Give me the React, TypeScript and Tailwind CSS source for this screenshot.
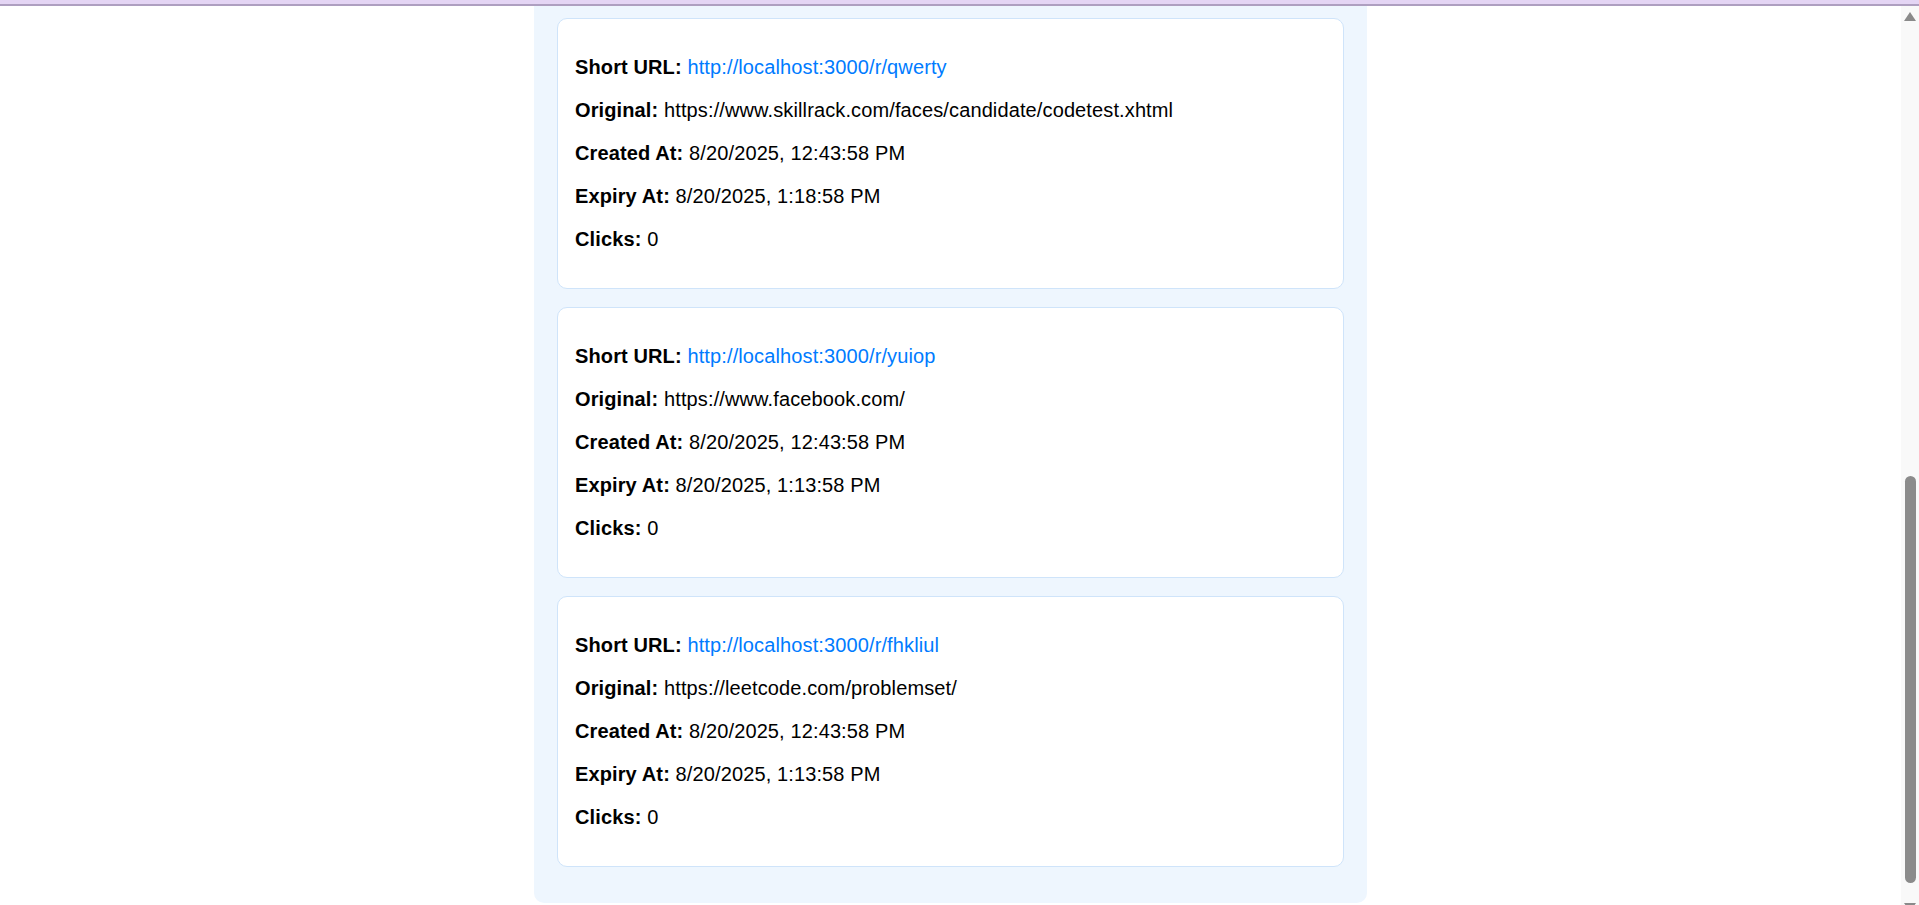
import React from "react";

interface ShortLink {
  code: string;
  original: string;
  createdAt: string;
  expiryAt: string;
  clicks: number;
}

const links: ShortLink[] = [
  {
    code: "qwerty",
    original: "https://www.skillrack.com/faces/candidate/codetest.xhtml",
    createdAt: "8/20/2025, 12:43:58 PM",
    expiryAt: "8/20/2025, 1:18:58 PM",
    clicks: 0,
  },
  {
    code: "yuiop",
    original: "https://www.facebook.com/",
    createdAt: "8/20/2025, 12:43:58 PM",
    expiryAt: "8/20/2025, 1:13:58 PM",
    clicks: 0,
  },
  {
    code: "fhkliul",
    original: "https://leetcode.com/problemset/",
    createdAt: "8/20/2025, 12:43:58 PM",
    expiryAt: "8/20/2025, 1:13:58 PM",
    clicks: 0,
  },
];

const LinkCard: React.FC<{ link: ShortLink }> = ({ link }) => {
  const shortUrl = `http://localhost:3000/r/${link.code}`;
  return (
    <div className="bg-white border border-[#cfe4fa] rounded-[10px] px-[17px] py-[37px] flex flex-col gap-[20px] leading-[23px]">
      <p>
        <strong>Short URL:</strong>{" "}
        <a href={shortUrl} className="text-[#007bff]">
          {shortUrl}
        </a>
      </p>
      <p>
        <strong>Original:</strong> {link.original}
      </p>
      <p>
        <strong>Created At:</strong> {link.createdAt}
      </p>
      <p>
        <strong>Expiry At:</strong> {link.expiryAt}
      </p>
      <p>
        <strong>Clicks:</strong> {link.clicks}
      </p>
    </div>
  );
};

// fake browser scrollbar, the page in the shot is scrolled down
const Scrollbar = () => (
  <div className="w-[18px] bg-[#f9f9f9] flex flex-col items-center overflow-hidden">
    <svg width="12" height="9" viewBox="0 0 12 9" className="mt-[6px] shrink-0">
      <polygon points="6,0 12,9 0,9" fill="#8a8a8a" />
    </svg>
    <div className="mt-[455px] w-[11px] h-[407px] shrink-0 rounded-full bg-[#8b8b8b]" />
    <svg width="12" height="9" viewBox="0 0 12 9" className="mt-[20px] shrink-0">
      <polygon points="0,0 12,0 6,9" fill="#8a8a8a" />
    </svg>
  </div>
);

export default function App() {
  return (
    <div className="h-[905px] overflow-hidden bg-white flex flex-col font-['Liberation_Sans',Arial,sans-serif] text-[20px] tracking-[0.12px] text-black">
      <div className="h-[6px] bg-[#e4d5f4] border-b-2 border-[#ae9fc0] shrink-0" />
      <div className="flex flex-1 min-h-0">
        <main className="flex-1 overflow-hidden">
          <section className="w-[833px] mx-auto bg-[#eef6fe] px-[23px] pt-[12px] pb-[36px] rounded-b-[10px] flex flex-col gap-[18px]">
            {links.map((l) => (
              <LinkCard key={l.code} link={l} />
            ))}
          </section>
        </main>
        <Scrollbar />
      </div>
    </div>
  );
}
